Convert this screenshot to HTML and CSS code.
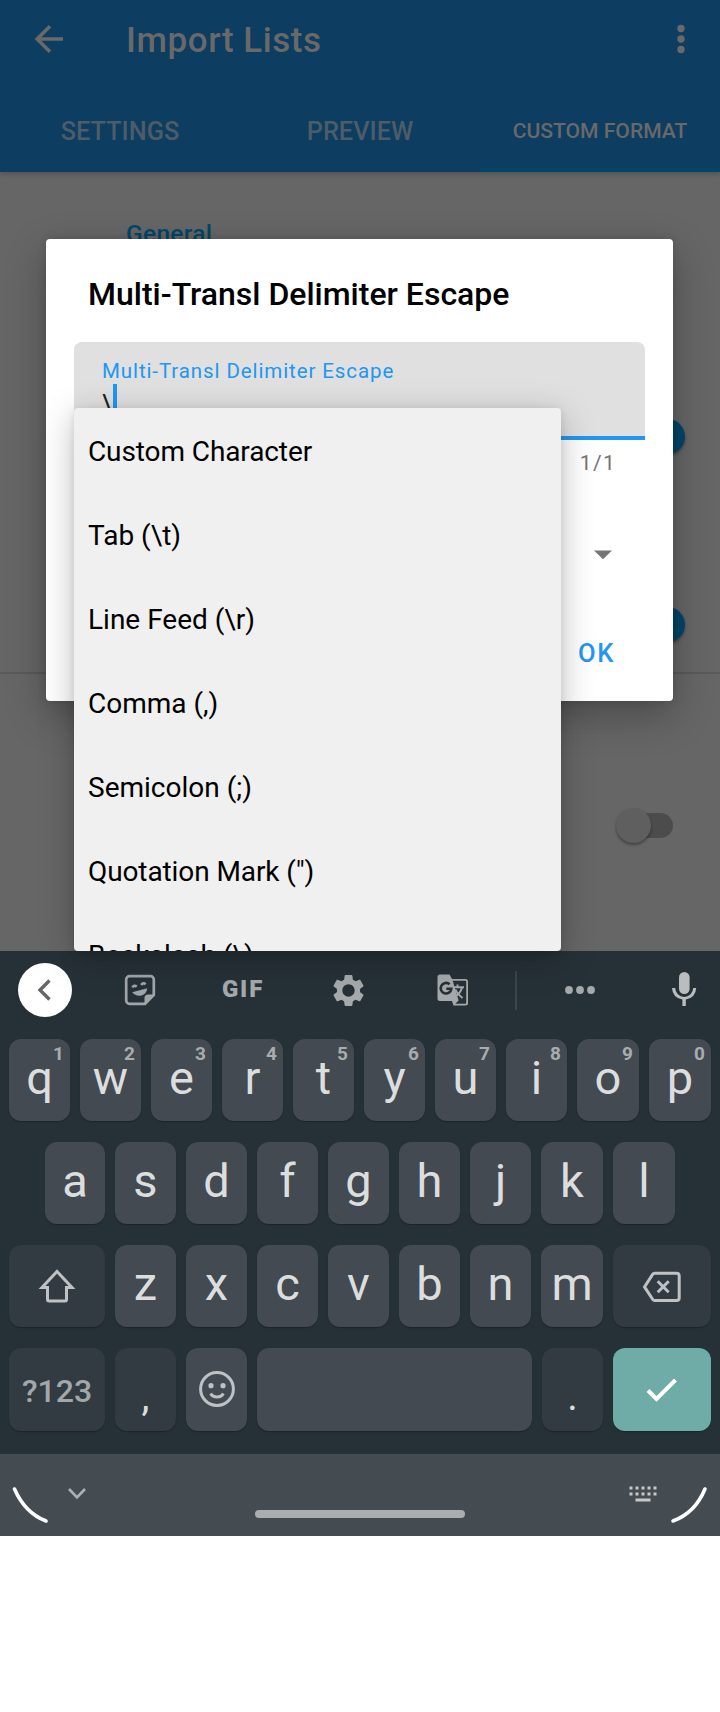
FILE: index.html
```html
<!DOCTYPE html>
<html lang="en">
<head>
<meta charset="utf-8">
<title>Import Lists</title>
<link rel="stylesheet" href="styles.css">
</head>
<body>
<div class="screen">
  <header class="appbar">
    <div class="toolbar">
      <svg class="back" width="28" height="28" viewBox="0 0 28 28"><path d="M28 14H2M15 1.3L2.2 14L15 26.700"/></svg>
      <h1 class="title">Import Lists</h1>
      <svg class="more" width="8" height="30" viewBox="0 0 8 30"><circle cx="4" cy="4.500" r="3.700"/><circle cx="4" cy="15" r="3.700"/><circle cx="4" cy="25.500" r="3.700"/></svg>
    </div>
    <nav class="tabs">
      <span class="tab"><span class="tab-text">SETTINGS</span></span>
      <span class="tab"><span class="tab-text preview">PREVIEW</span></span>
      <span class="tab active"><span class="tab-text">CUSTOM FORMAT</span></span>
    </nav>
  </header>

  <main class="content">
    <section class="group">
      <h2 class="group-title">General</h2>
      <div class="setting first"><span class="switch on"></span></div>
      <div class="setting second"><span class="switch on"></span></div>
    </section>
    <section class="group last">
      <div class="setting third"><span class="switch"></span></div>
    </section>
  </main>

  <section class="dialog">
    <h2 class="dialog-title"><span>Multi-Transl Delimiter Escape</span></h2>
    <div class="field">
      <span class="field-label">Multi-Transl Delimiter Escape</span>
      <div class="field-value"><span>\</span><i class="caret"></i></div>
    </div>
    <div class="counter">1/1</div>
    <div class="select"><svg width="18" height="10" viewBox="0 0 18 10"><path d="M0 .5H18L9 9.200Z"/></svg></div>
    <div class="actions"><span class="ok">OK</span></div>
  </section>

  <ul class="menu">
    <li><span class="tight">Custom Character</span></li>
    <li><span>Tab (\t)</span></li>
    <li><span>Line Feed (\r)</span></li>
    <li><span>Comma (,)</span></li>
    <li><span>Semicolon (;)</span></li>
    <li><span class="tight">Quotation Mark (")</span></li>
    <li><span>Backslash (\)</span></li>
  </ul>

  <section class="keyboard">
    <div class="strip">
      <span class="collapse"><svg width="16" height="24" viewBox="0 0 16 24"><path d="M12.500 2.500L3 12L12.500 21.500"/></svg></span>
      <svg class="line" width="32" height="32" viewBox="0 0 32 32"><path d="M5.500 2.200H26.500A3.300 3.300 0 0 1 29.800 5.500V21L21 29.800H5.500A3.300 3.300 0 0 1 2.200 26.500V5.500A3.300 3.300 0 0 1 5.500 2.200Z"/><path class="fill" d="M30 20.500H24Q20.500 20.500 20.500 24V30ZM8.200 18.200L23.200 14.300Q22.500 20.400 17.500 21.500Q11.500 22.500 8.200 18.200Z"/><path d="M8.500 13.500Q10 10.500 12.700 12.600M17.300 11Q19 8 21.700 10.200"/></svg>
      <span class="gif">GIF</span>
      <svg class="solid gear" width="37" height="37" viewBox="0 0 24 24"><path d="M19.430 12.980c.040-.320.070-.640.070-.980s-.030-.660-.070-.980l2.110-1.650c.190-.150.240-.420.120-.640l-2-3.460c-.120-.220-.390-.300-.610-.220l-2.490 1c-.520-.400-1.080-.730-1.690-.980l-.380-2.650C14.460 2.180 14.250 2 14 2h-4c-.250 0-.460.180-.490.420l-.380 2.650c-.610.250-1.170.590-1.690.980l-2.490-1c-.230-.090-.490 0-.610.220l-2 3.460c-.130.220-.070.490.120.640l2.110 1.650c-.040.320-.070.650-.070.980s.030.660.070.980l-2.110 1.650c-.190.150-.240.420-.120.640l2 3.460c.120.220.390.300.610.220l2.490-1c.520.400 1.080.730 1.690.980l.380 2.650c.030.240.240.420.490.420h4c.250 0 .460-.180.490-.420l.380-2.650c.610-.250 1.170-.590 1.690-.980l2.490 1c.230.090.490 0 .610-.220l2-3.460c.120-.220.070-.490-.120-.640l-2.110-1.650zM12 16c-2.210 0-4-1.790-4-4s1.790-4 4-4 4 1.790 4 4-1.790 4-4 4z"/></svg>
      <svg class="translate" width="32" height="32" viewBox="0 0 32 32"><path class="solid" d="M3 .5H12.500L15 5H28.500A2.500 2.500 0 0 1 31 7.500V29A2.500 2.500 0 0 1 28.500 31.500H16.500L15 27H3A2.500 2.500 0 0 1 .5 24.500V3A2.500 2.500 0 0 1 3 .5Z"/><path class="dark" d="M15.700 6.800H28.200A1 1 0 0 1 29.200 7.800V28.700A1 1 0 0 1 28.200 29.700H18.300L21.600 26.500Z"/><path class="stroke" d="M16.500 13.200H27M20.500 10.500V13M25 13.500Q23.500 19 18.500 22.500M18.500 15.500Q20 19.500 25.500 24"/><path class="g" d="M12.600 10.300A5.300 5.300 0 1 0 14.300 14.800H9.300"/></svg>
      <i class="rule"></i>
      <svg class="solid" width="32" height="10" viewBox="0 0 32 10"><circle cx="5" cy="5" r="3.900"/><circle cx="16" cy="5" r="3.900"/><circle cx="27" cy="5" r="3.900"/></svg>
      <svg class="solid mic" width="26" height="36" viewBox="0 0 26 36"><rect x="8" y="1" width="10.600" height="22" rx="5.300"/><path d="M1 17H4.200A9 9 0 0 0 22.200 17H25.200Q24.700 26.500 14.800 28.600V35H11.400V28.600Q1.500 26.500 1 17Z"/></svg>
    </div>
    <div class="keys row1">
      <span class="key"><b>1</b>q</span><span class="key"><b>2</b>w</span><span class="key"><b>3</b>e</span><span class="key"><b>4</b>r</span><span class="key"><b>5</b>t</span><span class="key"><b>6</b>y</span><span class="key"><b>7</b>u</span><span class="key"><b>8</b>i</span><span class="key"><b>9</b>o</span><span class="key"><b>0</b>p</span>
    </div>
    <div class="keys row2">
      <span class="key">a</span><span class="key">s</span><span class="key">d</span><span class="key">f</span><span class="key">g</span><span class="key">h</span><span class="key">j</span><span class="key">k</span><span class="key">l</span>
    </div>
    <div class="keys row3">
      <span class="key fn"><svg class="key-icon" width="36" height="34" viewBox="0 0 36 34"><path d="M18 2.500L33 18.500H27.500V30.500Q27.500 32 26 32H10Q8.500 32 8.500 30.500V18.500H3Z"/></svg></span>
      <span class="key">z</span><span class="key">x</span><span class="key">c</span><span class="key">v</span><span class="key">b</span><span class="key">n</span><span class="key">m</span>
      <span class="key fn"><svg class="key-icon erase" width="40" height="32" viewBox="0 0 40 32"><path d="M12.500 2.200H34.500Q37.200 2.200 37.200 5V27Q37.200 29.500 34.500 29.500H12.500Q11.500 29.500 10.800 28.500L2.500 15.900L10.800 3.200Q11.500 2.200 12.500 2.200Z"/><path d="M15.700 10.300L26.700 21.300M26.700 10.300L15.700 21.300"/></svg></span>
    </div>
    <div class="keys row4">
      <span class="key fn sym">?123</span>
      <span class="key fn comma">,</span>
      <span class="key"><svg class="key-icon smile" width="38" height="38" viewBox="0 0 38 38"><circle cx="19" cy="19" r="16.400"/><path d="M12.700 23.500Q14.500 27 19 27T25.300 23.500"/><circle class="eye" cx="13" cy="15.700" r="2.600"/><circle class="eye" cx="25" cy="15.700" r="2.600"/></svg></span>
      <span class="key"></span>
      <span class="key fn comma">.</span>
      <span class="key enter"><svg width="34" height="26" viewBox="0 0 34 26"><path d="M3 13.500L11.500 22L30.500 3"/></svg></span>
    </div>
    <footer class="navbar">
      <svg class="corner" width="38" height="38" viewBox="0 0 38 38"><path d="M3.500 3Q14 27 35 35"/></svg>
      <svg class="hide" width="20" height="14" viewBox="0 0 20 14"><path d="M2 2L10 10.300L18 2"/></svg>
      <i class="pill"></i>
      <svg class="switcher" width="28" height="16" viewBox="0 0 28 16"><path d="M.5 2H28M.5 8H28" stroke-dasharray="3 3"/><path d="M6.500 14H21.500"/></svg>
      <svg class="corner right" width="38" height="38" viewBox="0 0 38 38"><path d="M35 3Q25 27 3 35"/></svg>
    </footer>
  </section>
</div>
</body>
</html>
```

FILE: styles.css
```css
* { box-sizing: border-box; }
body { margin: 0; background: #fff; font-family: Roboto, "Noto Sans", sans-serif; }
h1, h2, ul { margin: 0; padding: 0; font-weight: 500; }
svg { display: block; overflow: visible; flex: none; }
path { fill: none; }
.screen { position: relative; width: 720px; height: 1712px; display: flex; flex-direction: column; }

.appbar { position: relative; z-index: 1; flex: none; height: 172px; background: #0d3d60; box-shadow: 0 2px 5px rgba(0,0,0,.2); display: flex; flex-direction: column; }
.toolbar { height: 92px; padding: 0 35px 14px; display: flex; align-items: center; }
.back { stroke: #696969; stroke-width: 3.6; }
.title { margin: 3px 0 0 63px; flex: 1; font-size: 35px; letter-spacing: .55px; color: #696969; line-height: 40px; }
.more { fill: #696969; }
.tabs { flex: 1; display: grid; grid-template-columns: repeat(3, 1fr); }
.tab { display: flex; align-items: center; justify-content: center; padding-bottom: 2px; font-size: 25.3px; font-weight: 500; color: #4c5c68; }
.tab.active { font-size: 21.1px; color: #696969; border-bottom: 4px solid #00466a; padding: 1px 0 0; }

.content { flex: none; height: 779px; background: #666; }
.group { height: 502px; padding: 47px 36px 0 126px; border-bottom: 2px solid #5a5a5a; }
.group.last { height: 277px; padding-top: 133px; border: 0; }
.group-title { font-size: 24.5px; line-height: 29px; letter-spacing: .3px; color: #004669; }
.setting { display: flex; justify-content: flex-end; margin-right: -1px; }
.first { margin-top: 170px; }
.second { margin-top: 152px; }
.third { padding-right: 12px; }
.switch { position: relative; width: 55px; height: 36px; display: flex; align-items: center; }
.switch::before { content: ""; position: relative; z-index: 1; flex: none; width: 35px; height: 35px; margin-left: -2px; border-radius: 50%; background: #5f5f5f; box-shadow: 0 2px 3px rgba(0,0,0,.35); }
.switch:not(.on)::after { content: ""; flex: none; width: 39px; height: 25px; margin-left: -17px; border-radius: 0 13px 13px 0; background: #4c4c4c; }
.switch.on { justify-content: flex-end; }
.switch.on::before { background: #00466a; }

.dialog { position: absolute; z-index: 2; left: 46px; top: 239px; width: 627px; height: 462px; border-radius: 4px; background: #fff; box-shadow: 0 14px 40px rgba(0,0,0,.28), 0 0 10px rgba(0,0,0,.12); padding: 0 28px; }
.dialog-title { height: 103px; padding: 35px 14px 0; font-size: 32px; line-height: 40px; color: #000; white-space: nowrap; }
.field { height: 98px; padding: 15px 28px 0; background: #e0e0e0; border-bottom: 4px solid #2196f3; border-radius: 8px 8px 0 0; }
.field-label { display: block; font-size: 20.5px; line-height: 28px; letter-spacing: .9px; color: #2196f3; white-space: nowrap; }
.field-value { display: flex; align-items: flex-start; font-size: 27px; line-height: 32px; color: #222; }
.field-value span { width: 11px; margin-top: 4px; }
.caret { width: 4px; height: 36px; margin-top: -1px; background: #2196f3; }
.counter { padding: 9px 29px 0 0; text-align: right; font-size: 21px; line-height: 28px; letter-spacing: 1.3px; color: #757575; }
.select { display: flex; justify-content: flex-end; padding: 73px 33px 0 0; }
.select path { fill: #757575; }
.actions { display: flex; justify-content: flex-end; padding: 77px 29px 0 0; }
.ok { font-size: 25.5px; font-weight: 500; line-height: 32px; letter-spacing: 1.6px; margin-right: 1px; color: #2196f3; }

.menu { position: absolute; z-index: 4; left: 74px; top: 408px; width: 487px; height: 543px; overflow: hidden; list-style: none; border-radius: 4px; background: #f0f0f0; box-shadow: 0 8px 34px rgba(0,0,0,.25), 0 2px 8px rgba(0,0,0,.1); }
.menu li { height: 84px; padding: 2px 0 0 14px; display: flex; align-items: center; font-size: 28px; font-weight: 400; color: #000; }
.tight { letter-spacing: -.1px; }

.keyboard { position: relative; flex: none; z-index: 3; height: 585px; background: #263137; display: flex; flex-direction: column; }
.strip { height: 78px; display: grid; grid-template-columns: 90px 100px 106px 104px 106px 20px 108px 86px; align-items: center; justify-items: center; }
.collapse { width: 54px; height: 54px; margin-top: -1px; border-radius: 50%; background: #fff; display: flex; align-items: center; justify-content: center; }
.collapse path { stroke: #666; stroke-width: 3.4; }
.line { margin-top: -1px; stroke: #9fa5a8; stroke-width: 2.7; }
.line .fill { fill: #9fa5a8; stroke: none; }
.gif { font-size: 24px; font-weight: 900; letter-spacing: 1.8px; color: #a5a9ab; line-height: 28px; margin-top: -2px; }
.solid, .solid path { fill: #a5a9ab; }
.translate .solid { fill: #a5a9ab; }
.dark { fill: #263137; }
.stroke { stroke: #a5a9ab; stroke-width: 2; }
.g { stroke: #263137; stroke-width: 2.6; }
.rule { width: 2px; height: 39px; background: #3b464b; }
.mic, .mic path { fill: #babdc0; }
.mic { margin: -2px 0 0 14px; }
.keys { height: 82px; margin: 10px 9px 11px; display: grid; gap: 10px; flex: none; }
.row1 { grid-template-columns: repeat(8, 61px) 62px 62px; }
.row2 { grid-template-columns: 60px repeat(6, 61px) 62px 62px; margin-left: 45px; margin-right: 45px; }
.row3 { grid-template-columns: 96px repeat(6, 61px) 62px 98px; }
.row4 { grid-template-columns: 96px 61px 61px 275px 61px 98px; height: 83px; margin-bottom: 23px; }
.key { position: relative; display: flex; align-items: center; justify-content: center; padding-bottom: 6px; border-radius: 12px; background: #434a51; box-shadow: 0 1px 1px #1b2429; color: #dcdddf; font-size: 47px; line-height: 55px; }
.key b { position: absolute; right: 6px; top: 3px; font-size: 19px; line-height: 24px; font-weight: 700; color: #a9acaf; }
.fn { background: #313b41; }
.sym { font-size: 32px; font-weight: 500; color: #a3a7aa; padding: 3px 0 0; }
.comma { font-size: 40px; padding: 13px 0 0; }
.key-icon { stroke: #bfc2c5; stroke-width: 3; }
.row3 .key-icon { margin-top: 5px; }
.row3 .erase { margin-top: 7px; }
.smile { margin-top: 4px; }
.smile .eye { fill: #bfc2c5; stroke: none; }
.smile circle { fill: none; }
.enter { background: #6faca7; padding: 0; }
.enter path { stroke: #fff; stroke-width: 4; }
.navbar { height: 82px; background: #454c51; display: flex; align-items: flex-start; padding: 32px 12px 0 11px; }
.corner path { stroke: #fff; stroke-width: 3.6; stroke-linecap: round; }
.hide { margin: 1px 0 0 18px; stroke: #aeb1b3; stroke-width: 2.6; }
.pill { width: 210px; height: 8px; margin: 24px 0 0 168px; border-radius: 4px; background: #a9adb0; }
.switcher { margin-left: 164px; stroke: #c6c8ca; stroke-width: 3; }
.corner.right { margin-left: auto; }
```
